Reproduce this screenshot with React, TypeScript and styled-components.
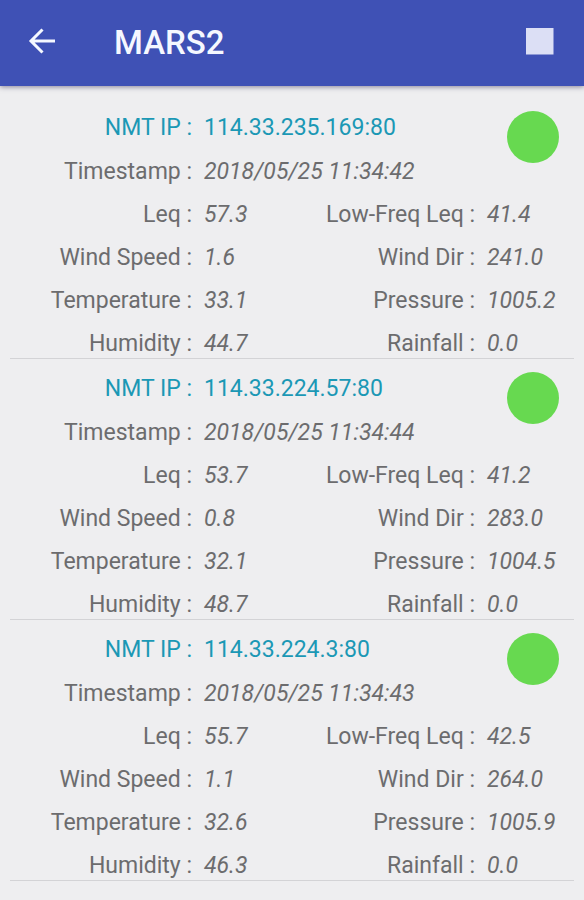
import React from "react";
import styled, { createGlobalStyle } from "styled-components";

const GlobalStyle = createGlobalStyle`
  * { box-sizing: border-box; }
  body {
    margin: 0;
    background: #eeeef0;
    font-family: Roboto, "Liberation Sans", sans-serif;
  }
`;

const Screen = styled.div`
  min-height: 100vh;
  background: #eeeef0;
`;

const AppBar = styled.header`
  display: flex;
  align-items: center;
  padding: 23px 22px;
  background: #3f51b5;
  color: #f5f8ff;
  box-shadow: 0 1px 5px rgba(40, 30, 70, 0.5);
`;

const IconButton = styled.button`
  display: grid;
  place-items: center;
  width: 40px;
  height: 40px;
  padding: 0;
  border: 0;
  background: transparent;
  color: inherit;
  cursor: pointer;
`;

const Title = styled.h1`
  flex: 1;
  margin: 0 0 0 52px;
  font-size: 33px;
  font-weight: 500;
  line-height: 40px;
`;

const StationList = styled.main`
  padding: 12px 10px;
`;

const Station = styled.section`
  position: relative;
  padding-top: 15px;
  border-bottom: 1px solid #d3d3d6;
`;

const Readings = styled.dl`
  display: grid;
  grid-template-columns: 182px 97fr 186px 99fr;
  row-gap: 15px;
  margin: 0;
  font-size: 23px;
  line-height: 28px;
  white-space: nowrap;
  color: #6c6c6e;
`;

const Label = styled.dt<{ $accent?: boolean }>`
  text-align: right;
  line-height: ${(p) => (p.$accent ? "30px" : "28px")};
  color: ${(p) => (p.$accent ? "#1b98b5" : "inherit")};
`;

const Value = styled.dd<{ $accent?: boolean; $wide?: boolean }>`
  margin: 0;
  padding-left: 12px;
  line-height: ${(p) => (p.$accent ? "30px" : "28px")};
  font-style: ${(p) => (p.$accent ? "normal" : "italic")};
  color: ${(p) => (p.$accent ? "#1b98b5" : "inherit")};
  grid-column: ${(p) => (p.$wide ? "span 3" : "auto")};
`;

const StatusDot = styled.span`
  position: absolute;
  top: 13px;
  right: 15px;
  width: 52px;
  height: 52px;
  border-radius: 50%;
  background: #67d950;
`;

interface StationData {
  ip: string;
  timestamp: string;
  readings: [string, string][];
}

const makeReadings = (v: string[]): [string, string][] =>
  ["Leq", "Low-Freq Leq", "Wind Speed", "Wind Dir", "Temperature", "Pressure", "Humidity", "Rainfall"].map(
    (name, i) => [name, v[i]]
  );

const stations: StationData[] = [
  {
    ip: "114.33.235.169:80",
    timestamp: "2018/05/25 11:34:42",
    readings: makeReadings(["57.3", "41.4", "1.6", "241.0", "33.1", "1005.2", "44.7", "0.0"]),
  },
  {
    ip: "114.33.224.57:80",
    timestamp: "2018/05/25 11:34:44",
    readings: makeReadings(["53.7", "41.2", "0.8", "283.0", "32.1", "1004.5", "48.7", "0.0"]),
  },
  {
    ip: "114.33.224.3:80",
    timestamp: "2018/05/25 11:34:43",
    readings: makeReadings(["55.7", "42.5", "1.1", "264.0", "32.6", "1005.9", "46.3", "0.0"]),
  },
];

export default function App() {
  return (
    <Screen>
      <GlobalStyle />
      <AppBar>
        <IconButton type="button" aria-label="Back">
          <svg width="40" height="40" viewBox="0 0 40 40" fill="none" stroke="currentColor" strokeWidth="3">
            <path d="M33 18H9M20.5 6.5L9 18l11.5 11.5" />
          </svg>
        </IconButton>
        <Title>MARS2</Title>
        <IconButton type="button" aria-label="Stop">
          <svg width="40" height="40" viewBox="0 0 40 40" fill="#dcdff5">
            <rect x="4" y="5" width="27.5" height="26.5" />
          </svg>
        </IconButton>
      </AppBar>
      <StationList>
        {stations.map((s) => (
          <Station key={s.ip}>
            <Readings>
              <Label $accent>NMT IP :</Label>
              <Value $accent $wide>{s.ip}</Value>
              <Label>Timestamp :</Label>
              <Value $wide>{s.timestamp}</Value>
              {s.readings.map(([name, value]) => (
                <React.Fragment key={name}>
                  <Label>{name} :</Label>
                  <Value>{value}</Value>
                </React.Fragment>
              ))}
            </Readings>
            <StatusDot role="img" aria-label="Online" />
          </Station>
        ))}
      </StationList>
    </Screen>
  );
}
